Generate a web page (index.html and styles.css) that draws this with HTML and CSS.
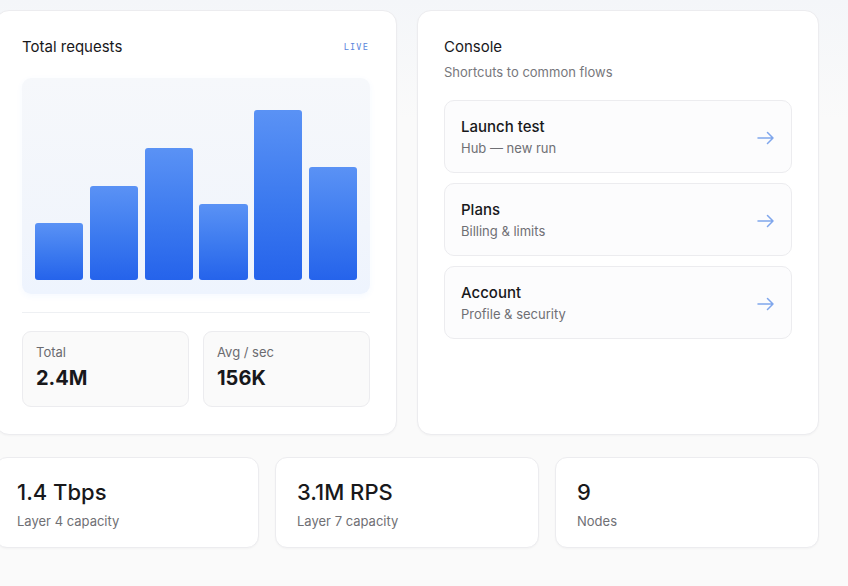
FILE: index.html
```html
<!DOCTYPE html>
<html lang="en">
<head>
<meta charset="utf-8">
<title>Dashboard</title>
<link rel="stylesheet" href="styles.css">
</head>
<body>
<main class="page">
  <section class="top-row">
    <article class="card requests">
      <header class="card-head">
        <h2 class="card-title">Total requests</h2>
        <span class="live">LIVE</span>
      </header>
      <div class="chart">
        <div class="bar" style="height:57px"></div>
        <div class="bar" style="height:94px"></div>
        <div class="bar" style="height:132px"></div>
        <div class="bar" style="height:76px"></div>
        <div class="bar" style="height:170px"></div>
        <div class="bar" style="height:113px"></div>
      </div>
      <hr class="divider">
      <div class="stats">
        <div class="stat">
          <div class="stat-label">Total</div>
          <div class="stat-value">2.4M</div>
        </div>
        <div class="stat">
          <div class="stat-label">Avg / sec</div>
          <div class="stat-value">156K</div>
        </div>
      </div>
    </article>
    <article class="card console">
      <h2 class="card-title">Console</h2>
      <p class="card-sub">Shortcuts to common flows</p>
      <ul class="links">
        <li class="link">
          <div>
            <div class="link-title">Launch test</div>
            <div class="link-sub">Hub — new run</div>
          </div>
          <svg class="arrow" width="18" height="14" viewBox="0 0 18 14" fill="none" stroke="currentColor" stroke-width="1.5" stroke-linecap="round" stroke-linejoin="round"><path d="M1 7h15M10.5 1.5 16 7l-5.5 5.5"/></svg>
        </li>
        <li class="link">
          <div>
            <div class="link-title">Plans</div>
            <div class="link-sub">Billing &amp; limits</div>
          </div>
          <svg class="arrow" width="18" height="14" viewBox="0 0 18 14" fill="none" stroke="currentColor" stroke-width="1.5" stroke-linecap="round" stroke-linejoin="round"><path d="M1 7h15M10.5 1.5 16 7l-5.5 5.5"/></svg>
        </li>
        <li class="link">
          <div>
            <div class="link-title">Account</div>
            <div class="link-sub">Profile &amp; security</div>
          </div>
          <svg class="arrow" width="18" height="14" viewBox="0 0 18 14" fill="none" stroke="currentColor" stroke-width="1.5" stroke-linecap="round" stroke-linejoin="round"><path d="M1 7h15M10.5 1.5 16 7l-5.5 5.5"/></svg>
        </li>
      </ul>
    </article>
  </section>
  <section class="bottom-row">
    <div class="card metric">
      <div class="metric-value">1.4 Tbps</div>
      <div class="metric-label">Layer 4 capacity</div>
    </div>
    <div class="card metric">
      <div class="metric-value">3.1M RPS</div>
      <div class="metric-label">Layer 7 capacity</div>
    </div>
    <div class="card metric">
      <div class="metric-value">9</div>
      <div class="metric-label">Nodes</div>
    </div>
  </section>
</main>
</body>
</html>
```

FILE: styles.css
```css
* { box-sizing: border-box; }

html, body {
  margin: 0;
  padding: 0;
}

body {
  font-family: Inter, "Noto Sans", "Liberation Sans", sans-serif;
  color: #18181b;
  background: linear-gradient(180deg, #f4f6f9 0px, #fafafa 120px, #fafafa 100%);
  min-height: 586px;
  overflow: hidden;
}

.page {
  width: 824px;
  margin-left: -5px;
  padding-top: 10px;
}

.top-row {
  display: grid;
  grid-template-columns: 1fr 1fr;
  gap: 20px;
}

.bottom-row {
  display: grid;
  grid-template-columns: 1fr 1fr 1fr;
  gap: 16px;
  margin-top: 22px;
}

.card {
  background: #fff;
  border: 1px solid #ececef;
  border-radius: 14px;
  box-shadow: 0 1px 2px rgba(16, 24, 40, 0.03);
}

.requests, .console {
  padding: 26px 26px 27px;
}

.card-head {
  display: flex;
  justify-content: space-between;
  align-items: center;
  height: 20px;
  margin-bottom: 21px;
}

.card-title {
  margin: 0;
  font-size: 15px;
  line-height: 20px;
  font-weight: 400;
  color: #18181b;
}

.live {
  font-family: "DejaVu Sans Mono", "Liberation Mono", monospace;
  font-size: 8.5px;
  letter-spacing: 1.2px;
  color: #5b86dc;
  margin-right: 1px;
}

.chart {
  height: 216px;
  border-radius: 9px;
  background: linear-gradient(180deg, #f6f8fb 0%, #f1f5fc 70%, #eef4fe 100%);
  padding: 0 13px 14px;
  display: flex;
  align-items: flex-end;
  gap: 6.5px;
  box-shadow: 0 2px 6px rgba(59, 130, 246, 0.05);
}

.bar {
  flex: 1;
  border-radius: 3px;
  background: linear-gradient(180deg, #5a92f5 0%, #3b79ef 55%, #2563eb 100%);
}

.divider {
  border: 0;
  height: 1px;
  background: #eef0f3;
  margin: 18px 0;
}

.stats {
  display: grid;
  grid-template-columns: 1fr 1fr;
  gap: 14px;
}

.stat {
  background: #fafafa;
  border: 1px solid #ececef;
  border-radius: 9px;
  padding: 12px 13px 16px;
}

.stat-label {
  font-size: 13px;
  line-height: 16px;
  color: #6b6b70;
}

.stat-value {
  margin-top: 6px;
  font-size: 20px;
  line-height: 24px;
  font-weight: 700;
  color: #18181b;
}

.card-sub {
  margin: 6px 0 0;
  font-size: 13px;
  line-height: 19px;
  color: #77777c;
}

.links {
  list-style: none;
  margin: 18px 0 0;
  padding: 0;
  display: flex;
  flex-direction: column;
  gap: 10px;
}

.link {
  display: flex;
  align-items: center;
  justify-content: space-between;
  background: #fcfcfd;
  border: 1px solid #ececef;
  border-radius: 10px;
  padding: 16px 16px 15px;
}

.link-title {
  font-size: 15px;
  line-height: 20px;
  font-weight: 500;
  color: #18181b;
}

.link-sub {
  margin-top: 2px;
  font-size: 13px;
  line-height: 18px;
  color: #6f6f74;
}

.arrow {
  color: #7fa6ec;
  margin-top: 2px;
}

.metric {
  border-radius: 12px;
  padding: 20px 21px 17px;
}

.metric-value {
  font-size: 22px;
  line-height: 28px;
  font-weight: 500;
  color: #18181b;
}

.metric-label {
  margin-top: 6px;
  font-size: 13px;
  line-height: 18px;
  color: #6f6f74;
}
```
